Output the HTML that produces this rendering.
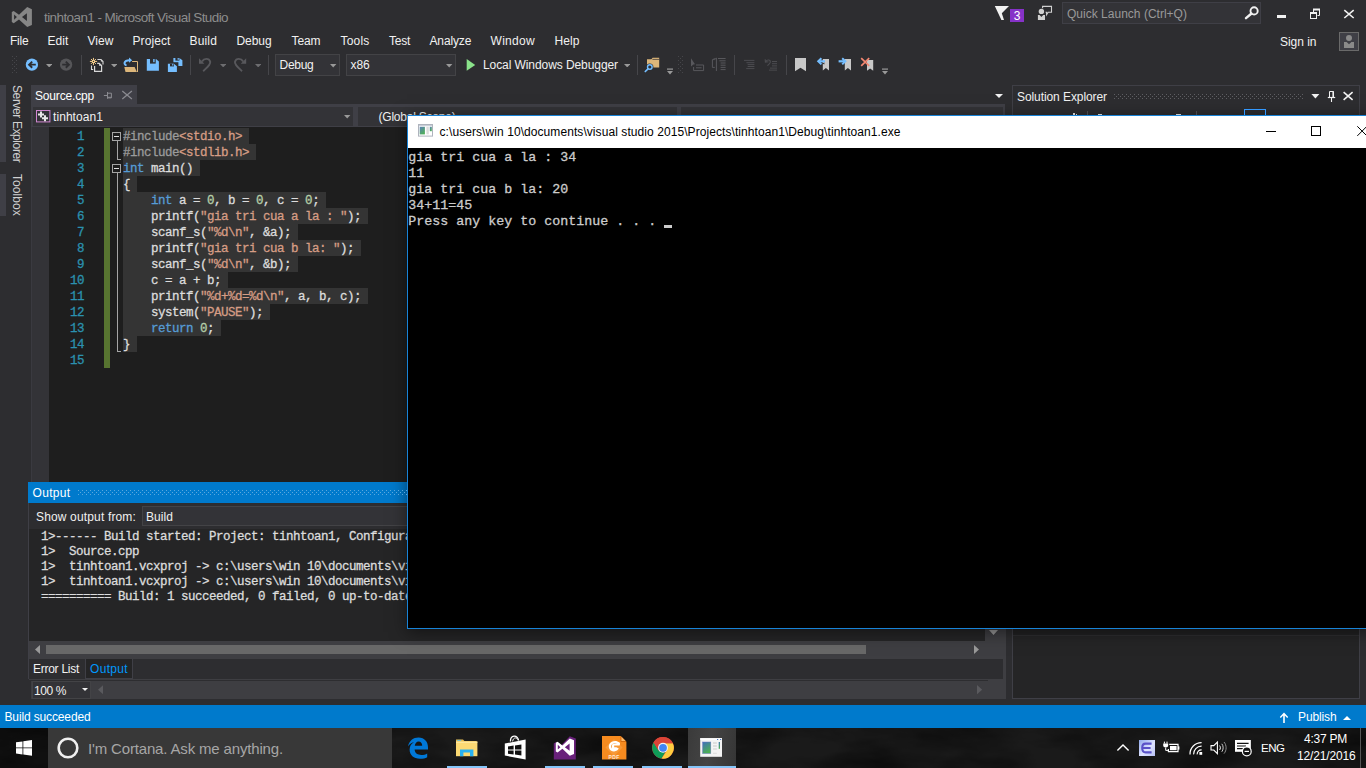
<!DOCTYPE html>
<html lang="en"><head><meta charset="utf-8"><title>tinhtoan1 - Microsoft Visual Studio</title>
<style>
html,body{margin:0;padding:0;}
body{width:1366px;height:768px;overflow:hidden;background:#2d2d30;position:relative;font-family:"Liberation Sans", sans-serif;}
#root{position:absolute;left:0;top:0;width:1366px;height:768px;overflow:hidden;}
#root div,#root span,#root svg{position:absolute;}
#root span{white-space:pre;}
.s{font-family:"Liberation Sans", sans-serif;}
.m{font-family:"Liberation Mono", monospace;-webkit-text-stroke:0.3px;}
</style></head>
<body>
<div id="root">
<span id="title" class="s" style="left:44px;top:8.82px;font-size:13.5px;line-height:18px;color:#8c8c8c;letter-spacing:-0.589px;">tinhtoan1 - Microsoft Visual Studio</span>
<span id="m_File" class="s" style="left:10.0px;top:33.34px;font-size:12px;line-height:16px;color:#f1f1f1;letter-spacing:-0.211px;">File</span>
<span id="m_Edit" class="s" style="left:47.5px;top:33.34px;font-size:12px;line-height:16px;color:#f1f1f1;letter-spacing:0.078px;">Edit</span>
<span id="m_View" class="s" style="left:87.5px;top:33.34px;font-size:12px;line-height:16px;color:#f1f1f1;letter-spacing:0.051px;">View</span>
<span id="m_Project" class="s" style="left:132.5px;top:33.34px;font-size:12px;line-height:16px;color:#f1f1f1;letter-spacing:0.092px;">Project</span>
<span id="m_Build" class="s" style="left:189.5px;top:33.34px;font-size:12px;line-height:16px;color:#f1f1f1;letter-spacing:0.163px;">Build</span>
<span id="m_Debug" class="s" style="left:236.5px;top:33.34px;font-size:12px;line-height:16px;color:#f1f1f1;letter-spacing:-0.075px;">Debug</span>
<span id="m_Team" class="s" style="left:291.5px;top:33.34px;font-size:12px;line-height:16px;color:#f1f1f1;letter-spacing:-0.086px;">Team</span>
<span id="m_Tools" class="s" style="left:340.5px;top:33.34px;font-size:12px;line-height:16px;color:#f1f1f1;letter-spacing:0.197px;">Tools</span>
<span id="m_Test" class="s" style="left:389.0px;top:33.34px;font-size:12px;line-height:16px;color:#f1f1f1;letter-spacing:-0.254px;">Test</span>
<span id="m_Analyze" class="s" style="left:429.5px;top:33.34px;font-size:12px;line-height:16px;color:#f1f1f1;letter-spacing:-0.136px;">Analyze</span>
<span id="m_Window" class="s" style="left:490.5px;top:33.34px;font-size:12px;line-height:16px;color:#f1f1f1;letter-spacing:0.302px;">Window</span>
<span id="m_Help" class="s" style="left:554.5px;top:33.34px;font-size:12px;line-height:16px;color:#f1f1f1;letter-spacing:0.078px;">Help</span>
<span id="signin" class="s" style="left:1280px;top:33.84px;font-size:12px;line-height:16px;color:#f1f1f1;letter-spacing:-0.029px;">Sign in</span>
<div style="left:1062px;top:2px;width:199px;height:22px;background:#333337;border:1px solid #3f3f46;box-sizing:border-box;"></div>
<span id="ql" class="s" style="left:1067px;top:6.34px;font-size:12px;line-height:16px;color:#999999;letter-spacing:0.013px;">Quick Launch (Ctrl+Q)</span>
<div style="left:275px;top:54px;width:64.5px;height:22px;background:#333337;border:1px solid #434346;box-sizing:border-box;"></div>
<span id="cb_debug" class="s" style="left:279.5px;top:56.84px;font-size:12px;line-height:16px;color:#f1f1f1;letter-spacing:-0.275px;">Debug</span>
<svg style="left:329.5px;top:63.7px;" width="7" height="4" viewBox="0 0 7 4"><path d="M0 0h6.4l-3.2 3.4z" fill="#999"/></svg>
<div style="left:346px;top:54px;width:110px;height:22px;background:#333337;border:1px solid #434346;box-sizing:border-box;"></div>
<span id="cb_x86" class="s" style="left:350.5px;top:56.84px;font-size:12px;line-height:16px;color:#f1f1f1;letter-spacing:-0.120px;">x86</span>
<svg style="left:446px;top:63.7px;" width="7" height="4" viewBox="0 0 7 4"><path d="M0 0h6.4l-3.2 3.4z" fill="#999"/></svg>
<span id="lwd" class="s" style="left:483px;top:57.34px;font-size:12px;line-height:16px;color:#f1f1f1;letter-spacing:-0.080px;">Local Windows Debugger</span>
<div style="left:81px;top:55px;width:1px;height:20px;background:#46464a;"></div>
<div style="left:190px;top:55px;width:1px;height:20px;background:#46464a;"></div>
<div style="left:268px;top:55px;width:1px;height:20px;background:#46464a;"></div>
<div style="left:637px;top:55px;width:1px;height:20px;background:#46464a;"></div>
<div style="left:734px;top:55px;width:1px;height:20px;background:#46464a;"></div>
<div style="left:786px;top:55px;width:1px;height:20px;background:#46464a;"></div>
<div style="left:0px;top:85px;width:5.7px;height:76.5px;background:#3f3f46;"></div>
<div style="left:0px;top:174px;width:5.7px;height:41.6px;background:#3f3f46;"></div>
<span class="s" style="left:24.1px;top:84.75px;font-size:12px;line-height:14px;color:#d0d0d0;transform-origin:0 0;transform:rotate(90deg);letter-spacing:-0.4px;">Server Explorer</span>
<span class="s" style="left:24.1px;top:173.7px;font-size:12px;line-height:14px;color:#d0d0d0;transform-origin:0 0;transform:rotate(90deg);letter-spacing:0.08px;">Toolbox</span>
<div style="left:31px;top:85px;width:106px;height:19px;background:#3f3f46;"></div>
<div style="left:31px;top:104px;width:974px;height:3px;background:#3f3f46;"></div>
<span id="tab_src" class="s" style="left:35px;top:88.14px;font-size:12px;line-height:16px;color:#ffffff;letter-spacing:-0.172px;">Source.cpp</span>
<div style="left:31px;top:107px;width:974px;height:20.5px;background:#3f3f46;"></div>
<div style="left:33px;top:107px;width:320px;height:19px;background:#333337;"></div>
<div style="left:357.5px;top:107px;width:319.5px;height:19px;background:#333337;"></div>
<div style="left:681px;top:107px;width:322px;height:19px;background:#333337;"></div>
<span id="nav1" class="s" style="left:53px;top:108.59px;font-size:12px;line-height:16px;color:#f1f1f1;letter-spacing:0.069px;">tinhtoan1</span>
<span id="nav2" class="s" style="left:378.5px;top:108.59px;font-size:12px;line-height:16px;color:#f1f1f1;letter-spacing:-0.218px;">(Global Scope)</span>
<div style="left:31px;top:127px;width:974px;height:355px;background:#1e1e1e;"></div>
<div style="left:31px;top:127px;width:18px;height:355px;background:#333337;"></div>
<div style="left:31px;top:127px;width:1px;height:355px;background:#3a3a40;"></div>
<div style="left:104px;top:128px;width:5.5px;height:240px;background:#577430;"></div>
<div style="left:122.5px;top:128px;width:126.5px;height:16px;background:#343434;"></div>
<span id="t22" class="m" style="left:77.0px;top:128.67px;font-size:12.5px;line-height:16px;color:#2b91af;letter-spacing:-0.500px;">1</span>
<span id="t23" class="m" style="left:123px;top:128.67px;font-size:12.5px;line-height:16px;color:#dcdcdc;letter-spacing:-0.500px;"><span style="position:static;color:#9b9b9b">#include</span><span style="position:static;color:#d69d85">&lt;stdio.h&gt;</span></span>
<div style="left:122.5px;top:144px;width:133.5px;height:16px;background:#343434;"></div>
<span id="t24" class="m" style="left:77.0px;top:144.67px;font-size:12.5px;line-height:16px;color:#2b91af;letter-spacing:-0.500px;">2</span>
<span id="t25" class="m" style="left:123px;top:144.67px;font-size:12.5px;line-height:16px;color:#dcdcdc;letter-spacing:-0.500px;"><span style="position:static;color:#9b9b9b">#include</span><span style="position:static;color:#d69d85">&lt;stdlib.h&gt;</span></span>
<div style="left:122.5px;top:160px;width:77.5px;height:16px;background:#343434;"></div>
<span id="t26" class="m" style="left:77.0px;top:160.67px;font-size:12.5px;line-height:16px;color:#2b91af;letter-spacing:-0.500px;">3</span>
<span id="t27" class="m" style="left:123px;top:160.67px;font-size:12.5px;line-height:16px;color:#dcdcdc;letter-spacing:-0.500px;"><span style="position:static;color:#569cd6">int</span><span style="position:static;color:#dcdcdc"> main()</span></span>
<div style="left:122.5px;top:176px;width:14.5px;height:16px;background:#343434;"></div>
<span id="t28" class="m" style="left:77.0px;top:176.67px;font-size:12.5px;line-height:16px;color:#2b91af;letter-spacing:-0.500px;">4</span>
<span id="t29" class="m" style="left:123px;top:176.67px;font-size:12.5px;line-height:16px;color:#dcdcdc;letter-spacing:-0.500px;"><span style="position:static;color:#dcdcdc">{</span></span>
<div style="left:122.5px;top:192px;width:203.5px;height:16px;background:#343434;"></div>
<span id="t30" class="m" style="left:77.0px;top:192.67px;font-size:12.5px;line-height:16px;color:#2b91af;letter-spacing:-0.500px;">5</span>
<span id="t31" class="m" style="left:123px;top:192.67px;font-size:12.5px;line-height:16px;color:#dcdcdc;letter-spacing:-0.500px;"><span style="position:static;color:#dcdcdc">    </span><span style="position:static;color:#569cd6">int</span><span style="position:static;color:#dcdcdc"> a = </span><span style="position:static;color:#b5cea8">0</span><span style="position:static;color:#dcdcdc">, b = </span><span style="position:static;color:#b5cea8">0</span><span style="position:static;color:#dcdcdc">, c = </span><span style="position:static;color:#b5cea8">0</span><span style="position:static;color:#dcdcdc">;</span></span>
<div style="left:122.5px;top:208px;width:245.5px;height:16px;background:#343434;"></div>
<span id="t32" class="m" style="left:77.0px;top:208.67px;font-size:12.5px;line-height:16px;color:#2b91af;letter-spacing:-0.500px;">6</span>
<span id="t33" class="m" style="left:123px;top:208.67px;font-size:12.5px;line-height:16px;color:#dcdcdc;letter-spacing:-0.500px;"><span style="position:static;color:#dcdcdc">    printf(</span><span style="position:static;color:#d69d85">"gia tri cua a la : "</span><span style="position:static;color:#dcdcdc">);</span></span>
<div style="left:122.5px;top:224px;width:175.5px;height:16px;background:#343434;"></div>
<span id="t34" class="m" style="left:77.0px;top:224.67px;font-size:12.5px;line-height:16px;color:#2b91af;letter-spacing:-0.500px;">7</span>
<span id="t35" class="m" style="left:123px;top:224.67px;font-size:12.5px;line-height:16px;color:#dcdcdc;letter-spacing:-0.500px;"><span style="position:static;color:#dcdcdc">    scanf_s(</span><span style="position:static;color:#d69d85">"%d\n"</span><span style="position:static;color:#dcdcdc">, &amp;a);</span></span>
<div style="left:122.5px;top:240px;width:238.5px;height:16px;background:#343434;"></div>
<span id="t36" class="m" style="left:77.0px;top:240.67px;font-size:12.5px;line-height:16px;color:#2b91af;letter-spacing:-0.500px;">8</span>
<span id="t37" class="m" style="left:123px;top:240.67px;font-size:12.5px;line-height:16px;color:#dcdcdc;letter-spacing:-0.500px;"><span style="position:static;color:#dcdcdc">    printf(</span><span style="position:static;color:#d69d85">"gia tri cua b la: "</span><span style="position:static;color:#dcdcdc">);</span></span>
<div style="left:122.5px;top:256px;width:175.5px;height:16px;background:#343434;"></div>
<span id="t38" class="m" style="left:77.0px;top:256.67px;font-size:12.5px;line-height:16px;color:#2b91af;letter-spacing:-0.500px;">9</span>
<span id="t39" class="m" style="left:123px;top:256.67px;font-size:12.5px;line-height:16px;color:#dcdcdc;letter-spacing:-0.500px;"><span style="position:static;color:#dcdcdc">    scanf_s(</span><span style="position:static;color:#d69d85">"%d\n"</span><span style="position:static;color:#dcdcdc">, &amp;b);</span></span>
<div style="left:122.5px;top:272px;width:105.5px;height:16px;background:#343434;"></div>
<span id="t40" class="m" style="left:70.0px;top:272.67px;font-size:12.5px;line-height:16px;color:#2b91af;letter-spacing:-0.500px;">10</span>
<span id="t41" class="m" style="left:123px;top:272.67px;font-size:12.5px;line-height:16px;color:#dcdcdc;letter-spacing:-0.500px;"><span style="position:static;color:#dcdcdc">    c = a + b;</span></span>
<div style="left:122.5px;top:288px;width:245.5px;height:16px;background:#343434;"></div>
<span id="t42" class="m" style="left:70.0px;top:288.67px;font-size:12.5px;line-height:16px;color:#2b91af;letter-spacing:-0.500px;">11</span>
<span id="t43" class="m" style="left:123px;top:288.67px;font-size:12.5px;line-height:16px;color:#dcdcdc;letter-spacing:-0.500px;"><span style="position:static;color:#dcdcdc">    printf(</span><span style="position:static;color:#d69d85">"%d+%d=%d\n"</span><span style="position:static;color:#dcdcdc">, a, b, c);</span></span>
<div style="left:122.5px;top:304px;width:147.5px;height:16px;background:#343434;"></div>
<span id="t44" class="m" style="left:70.0px;top:304.67px;font-size:12.5px;line-height:16px;color:#2b91af;letter-spacing:-0.500px;">12</span>
<span id="t45" class="m" style="left:123px;top:304.67px;font-size:12.5px;line-height:16px;color:#dcdcdc;letter-spacing:-0.500px;"><span style="position:static;color:#dcdcdc">    system(</span><span style="position:static;color:#d69d85">"PAUSE"</span><span style="position:static;color:#dcdcdc">);</span></span>
<div style="left:122.5px;top:320px;width:98.5px;height:16px;background:#343434;"></div>
<span id="t46" class="m" style="left:70.0px;top:320.67px;font-size:12.5px;line-height:16px;color:#2b91af;letter-spacing:-0.500px;">13</span>
<span id="t47" class="m" style="left:123px;top:320.67px;font-size:12.5px;line-height:16px;color:#dcdcdc;letter-spacing:-0.500px;"><span style="position:static;color:#dcdcdc">    </span><span style="position:static;color:#569cd6">return</span><span style="position:static;color:#dcdcdc"> </span><span style="position:static;color:#b5cea8">0</span><span style="position:static;color:#dcdcdc">;</span></span>
<div style="left:122.5px;top:336px;width:14.5px;height:16px;background:#343434;"></div>
<span id="t48" class="m" style="left:70.0px;top:336.67px;font-size:12.5px;line-height:16px;color:#2b91af;letter-spacing:-0.500px;">14</span>
<span id="t49" class="m" style="left:123px;top:336.67px;font-size:12.5px;line-height:16px;color:#dcdcdc;letter-spacing:-0.500px;"><span style="position:static;color:#dcdcdc">}</span></span>
<span id="t50" class="m" style="left:70.0px;top:352.67px;font-size:12.5px;line-height:16px;color:#2b91af;letter-spacing:-0.500px;">15</span>
<svg style="left:112px;top:132px;" width="9" height="9" viewBox="0 0 9 9"><rect x="0.5" y="0.5" width="8" height="8" fill="#1e1e1e" stroke="#a5a5a5"/><path d="M2 4.5h5" stroke="#e0e0e0"/></svg>
<svg style="left:112px;top:164px;" width="9" height="9" viewBox="0 0 9 9"><rect x="0.5" y="0.5" width="8" height="8" fill="#1e1e1e" stroke="#a5a5a5"/><path d="M2 4.5h5" stroke="#e0e0e0"/></svg>
<div style="left:117px;top:141px;width:1px;height:19px;background:#a5a5a5;"></div>
<div style="left:117px;top:159px;width:4px;height:1px;background:#a5a5a5;"></div>
<div style="left:117px;top:173px;width:1px;height:179px;background:#a5a5a5;"></div>
<div style="left:117px;top:351px;width:4px;height:1px;background:#a5a5a5;"></div>
<svg style="left:995px;top:94px;" width="8" height="4" viewBox="0 0 8 4"><path d="M0 0h8l-4 4z" fill="#f1f1f1"/></svg>
<div style="left:1012px;top:85px;width:348px;height:614px;background:#252526;border:1px solid #3f3f46;box-sizing:border-box;"></div>
<div style="left:1013px;top:86px;width:346px;height:21px;background:#2d2d30;"></div>
<div style="left:1013px;top:629px;width:346px;height:6px;background:#222223;"></div>
<div style="left:1013px;top:635px;width:346px;height:1px;background:#2f2f31;"></div>
<span id="solexp" class="s" style="left:1017px;top:88.84px;font-size:12px;line-height:16px;color:#f1f1f1;letter-spacing:-0.082px;">Solution Explorer</span>
<div style="left:1013px;top:107px;width:346px;height:8px;background:#2d2d30;"></div>
<div style="left:28px;top:482px;width:977px;height:217px;background:#2d2d30;"></div>
<div style="left:28px;top:482px;width:977px;height:21px;background:#007acc;"></div>
<span id="out_t" class="s" style="left:32.5px;top:484.84px;font-size:12px;line-height:16px;color:#ffffff;letter-spacing:0.328px;">Output</span>
<div style="left:28px;top:503px;width:1px;height:176px;background:#3f3f46;"></div>
<div style="left:29px;top:503px;width:976px;height:26px;background:#2d2d30;"></div>
<span id="sof" class="s" style="left:36px;top:508.84px;font-size:12px;line-height:16px;color:#f1f1f1;letter-spacing:0.154px;">Show output from:</span>
<div style="left:142px;top:506px;width:300px;height:20px;background:#333337;border:1px solid #434346;box-sizing:border-box;"></div>
<span id="out_build" class="s" style="left:146px;top:508.84px;font-size:12px;line-height:16px;color:#f1f1f1;letter-spacing:0.062px;">Build</span>
<div style="left:29px;top:529px;width:956px;height:112px;background:#252526;"></div>
<span id="t55" class="m" style="left:41px;top:528.67px;font-size:12.5px;line-height:16px;color:#dcdcdc;letter-spacing:-0.500px;">1&gt;------ Build started: Project: tinhtoan1, Configuration: Debug Win32 ------</span>
<span id="t56" class="m" style="left:41px;top:543.67px;font-size:12.5px;line-height:16px;color:#dcdcdc;letter-spacing:-0.500px;">1&gt;  Source.cpp</span>
<span id="t57" class="m" style="left:41px;top:558.67px;font-size:12.5px;line-height:16px;color:#dcdcdc;letter-spacing:-0.500px;">1&gt;  tinhtoan1.vcxproj -&gt; c:\users\win 10\documents\visual studio 2015\Projects\tinhtoan1\Debug\tinhtoan1.exe</span>
<span id="t58" class="m" style="left:41px;top:573.67px;font-size:12.5px;line-height:16px;color:#dcdcdc;letter-spacing:-0.500px;">1&gt;  tinhtoan1.vcxproj -&gt; c:\users\win 10\documents\visual studio 2015\Projects\tinhtoan1\Debug\tinhtoan1.pdb (Full PDB)</span>
<span id="t59" class="m" style="left:41px;top:588.67px;font-size:12.5px;line-height:16px;color:#dcdcdc;letter-spacing:-0.500px;">========== Build: 1 succeeded, 0 failed, 0 up-to-date, 0 skipped ==========</span>
<div style="left:29px;top:641px;width:977px;height:18px;background:#3e3e42;"></div>
<div style="left:985px;top:529px;width:21px;height:112px;background:#3e3e42;"></div>
<div style="left:46px;top:645px;width:820px;height:9px;background:#686868;"></div>
<svg style="left:35px;top:645px;" width="5" height="9" viewBox="0 0 5 9"><path d="M5 0v9l-5-4.5z" fill="#999"/></svg>
<svg style="left:974px;top:645px;" width="5.5" height="9.5" viewBox="0 0 5.5 9.5"><path d="M0 0v9l5-4.5z" fill="#999"/></svg>
<svg style="left:989px;top:630px;" width="9" height="5" viewBox="0 0 9 5"><path d="M0 0h9l-4.5 5z" fill="#999"/></svg>
<div style="left:29px;top:659px;width:974px;height:20px;background:#2d2d30;"></div>
<div style="left:84.5px;top:659px;width:48.5px;height:20px;background:#252526;border:1px solid #3f3f46;border-top:none;box-sizing:border-box;"></div>
<span id="errlist" class="s" style="left:33px;top:661.44px;font-size:12px;line-height:16px;color:#f1f1f1;letter-spacing:-0.269px;">Error List</span>
<span id="out_tab" class="s" style="left:90px;top:661.44px;font-size:12px;line-height:16px;color:#0097fb;letter-spacing:0.328px;">Output</span>
<div style="left:29px;top:679px;width:977px;height:2px;background:#3e3e42;"></div>
<div style="left:29px;top:680px;width:959px;height:1px;background:#2d2d30;"></div>
<div style="left:1003px;top:503px;width:3px;height:26px;background:#3e3e42;"></div>
<div style="left:1003px;top:641px;width:3px;height:57.5px;background:#3e3e42;"></div>
<div style="left:31px;top:681px;width:975px;height:17.5px;background:#3e3e42;"></div>
<div style="left:32px;top:681px;width:59px;height:18px;background:#333337;border:1px solid #434346;box-sizing:border-box;"></div>
<span id="zoom" class="s" style="left:34px;top:682.84px;font-size:12px;line-height:16px;color:#f1f1f1;letter-spacing:-0.406px;">100 %</span>
<svg style="left:82px;top:688px;" width="6" height="3" viewBox="0 0 6 3"><path d="M0 0h6l-3 3z" fill="#f1f1f1"/></svg>
<svg style="left:98px;top:685px;" width="5.2" height="9.3" viewBox="0 0 5.2 9.3"><path d="M5.2 0v9.3l-5.2-4.65z" fill="#5a5a5e"/></svg>
<svg style="left:977px;top:685px;" width="5.2" height="9.3" viewBox="0 0 5.2 9.3"><path d="M0 0v9.3l5.2-4.65z" fill="#5a5a5e"/></svg>
<div style="left:0px;top:705px;width:1366px;height:23px;background:#007acc;"></div>
<span id="status" class="s" style="left:4.5px;top:709.14px;font-size:12px;line-height:16px;color:#ffffff;letter-spacing:-0.138px;">Build succeeded</span>
<span id="publish" class="s" style="left:1298px;top:708.84px;font-size:12px;line-height:16px;color:#ffffff;letter-spacing:-0.123px;">Publish</span>
<svg style="left:1279px;top:712px;" width="10" height="11" viewBox="0 0 10 11"><path d="M5 0.5L0.8 5l1 1L4.2 3.6V11h1.6V3.6L8.2 6l1-1z" fill="#fff"/></svg>
<svg style="left:1343px;top:715.5px;" width="8" height="4" viewBox="0 0 8 4"><path d="M0 4h8l-4-4z" fill="#fff"/></svg>
<div style="left:407px;top:115px;width:970px;height:514px;background:#000000;border:1px solid #1883d7;box-sizing:border-box;box-shadow:0 3px 16px rgba(0,0,0,.5);"></div>
<div style="left:408px;top:116px;width:968px;height:32px;background:#ffffff;"></div>
<span id="con_t" class="s" style="left:439.5px;top:123.84px;font-size:12px;line-height:16px;color:#000000;letter-spacing:0.073px;">c:\users\win 10\documents\visual studio 2015\Projects\tinhtoan1\Debug\tinhtoan1.exe</span>
<span id="t66" class="m" style="left:408.3px;top:148.95px;font-size:13.33px;line-height:17px;color:#cccccc;letter-spacing:0.002px;">gia tri cua a la : 34</span>
<span id="t67" class="m" style="left:408.3px;top:164.95px;font-size:13.33px;line-height:17px;color:#cccccc;letter-spacing:0.002px;">11</span>
<span id="t68" class="m" style="left:408.3px;top:180.95px;font-size:13.33px;line-height:17px;color:#cccccc;letter-spacing:0.002px;">gia tri cua b la: 20</span>
<span id="t69" class="m" style="left:408.3px;top:196.95px;font-size:13.33px;line-height:17px;color:#cccccc;letter-spacing:0.002px;">34+11=45</span>
<span id="t70" class="m" style="left:408.3px;top:212.95px;font-size:13.33px;line-height:17px;color:#cccccc;letter-spacing:0.002px;">Press any key to continue . . . </span>
<div style="left:664px;top:225px;width:8px;height:3px;background:#cccccc;"></div>
<div style="left:1266px;top:131px;width:10px;height:1px;background:#000;"></div>
<div style="left:1311px;top:126px;width:10px;height:10px;background:transparent;border:1px solid #000;box-sizing:border-box;"></div>
<svg style="left:1357px;top:126px;" width="10" height="10" viewBox="0 0 10 10"><path d="M0.3 0.3l9.6 9.6M9.9 0.3l-9.6 9.6" stroke="#000" stroke-width="1" fill="none"/></svg>
<div style="left:0px;top:728px;width:1366px;height:40px;background:#1a1a1a;"></div>
<svg style="left:0px;top:728px;" width="1366" height="40" viewBox="0 0 1366 40"><defs><filter id="tx" x="0" y="0" width="100%" height="100%"><feTurbulence type="fractalNoise" baseFrequency="0.012 0.035" numOctaves="4" seed="7"/><feColorMatrix type="matrix" values="0 0 0 0 0  0 0 0 0 0  0 0 0 0 0  1.6 0 0 0 -0.55"/></filter></defs><rect width="1366" height="40" fill="#000" filter="url(#tx)" opacity="0.6"/></svg>
<div style="left:0px;top:728px;width:48px;height:40px;background:rgba(0,0,0,.35);"></div>
<div style="left:48px;top:728px;width:344px;height:40px;background:#383838;"></div>
<svg style="left:57px;top:737px;" width="22" height="22" viewBox="0 0 22 22"><circle cx="11" cy="11" r="9.3" fill="none" stroke="#f0f0f0" stroke-width="2.6"/></svg>
<span id="cortana" class="s" style="left:88px;top:739.00px;font-size:15px;line-height:20px;color:#a6a6a6;letter-spacing:-0.160px;">I'm Cortana. Ask me anything.</span>
<div style="left:688px;top:728px;width:48px;height:40px;background:#383838;background:linear-gradient(100deg,#3a3a3a,#444 45%,#353535);"></div>
<div style="left:446.5px;top:766px;width:40px;height:2px;background:#85c5f9;"></div>
<div style="left:544.5px;top:766px;width:40px;height:2px;background:#85c5f9;"></div>
<div style="left:593px;top:766px;width:40px;height:2px;background:#85c5f9;"></div>
<div style="left:642px;top:766px;width:40px;height:2px;background:#85c5f9;"></div>
<div style="left:688px;top:766px;width:48px;height:2px;background:#85c5f9;"></div>
<span id="eng" class="s" style="left:1261px;top:740.52px;font-size:11.5px;line-height:15px;color:#ffffff;letter-spacing:-0.474px;">ENG</span>
<span id="clock" class="s" style="left:1304px;top:730.84px;font-size:12px;line-height:16px;color:#ffffff;letter-spacing:-0.243px;">4:37 PM</span>
<span id="date" class="s" style="left:1297px;top:747.84px;font-size:12px;line-height:16px;color:#ffffff;letter-spacing:-0.156px;">12/21/2016</span>
<div style="left:1360px;top:728px;width:1px;height:40px;background:#555;"></div>
<svg style="left:0px;top:0px;" width="40" height="32" viewBox="0 0 40 32"><path fill-rule="evenodd" fill="#868686" d="M27.2 7.1L31.9 9.2V25L27.2 27L19 19.4L13.7 23.2L11.8 22.1V12.1L13.7 11L19 14.8ZM14.1 14.4V19.8L16.9 17.1ZM26.9 13.2V21L22 17.1Z"/></svg>
<svg style="left:990px;top:0px;" width="40" height="26" viewBox="0 0 40 26"><path fill="#f1f1f1" d="M4.8 5.9H19L11.8 13.2L14 19.9H11.4Z"/><rect x="20" y="9" width="14" height="13" fill="#8632c8"/></svg>
<span id="t75" class="s" style="left:1013.7px;top:7.84px;font-size:12px;line-height:16px;color:#ffffff;">3</span>
<svg style="left:1036px;top:4px;" width="18" height="18" viewBox="0 0 18 18"><circle cx="5.4" cy="7.4" r="2.7" fill="#d0d0d0"/><path fill="#d0d0d0" d="M1.9 11h7.1v4.9H1.9zM3.6 11l1.8 2 1.8-2z" fill-rule="evenodd"/><path fill="none" stroke="#d0d0d0" stroke-width="1.1" d="M6.6 4.2V2.4H15.5V8.2H12.2L10.6 10.6V8.2H9.6"/></svg>
<svg style="left:1243px;top:3px;" width="18" height="18" viewBox="0 0 18 18"><circle cx="11.1" cy="7.9" r="3.6" fill="none" stroke="#f1f1f1" stroke-width="1.9"/><path d="M8.5 10.5L3 15.2" stroke="#f1f1f1" stroke-width="2.4" stroke-linecap="round"/></svg>
<div style="left:1277px;top:15px;width:9px;height:3px;background:#f1f1f1;"></div>
<svg style="left:1308px;top:7px;" width="14" height="14" viewBox="0 0 14 14"><path fill="none" stroke="#f1f1f1" stroke-width="1" d="M5.5 5V2.5H11.5V8.5H9.5"/><path d="M5 2.5h7" stroke="#f1f1f1" stroke-width="2"/><rect x="2.5" y="6" width="6" height="5.5" fill="none" stroke="#f1f1f1"/><path d="M2 6h7" stroke="#f1f1f1" stroke-width="2"/></svg>
<svg style="left:1342px;top:8px;" width="14" height="12" viewBox="0 0 14 12"><path d="M2.3 2.2L11.7 10M11.7 2.2L2.3 10" stroke="#f1f1f1" stroke-width="1.6" fill="none"/></svg>
<div style="left:1339px;top:32px;width:20px;height:19px;background:#3f3f46;border:1px solid #6a6a6a;box-sizing:border-box;"></div>
<svg style="left:1339px;top:32px;" width="20" height="19" viewBox="0 0 20 19"><circle cx="10" cy="6" r="3" fill="#8a8a8a"/><path fill="#8a8a8a" fill-rule="evenodd" d="M5 10h10v6H5zM7.6 10l2.4 2.2 2.4-2.2z"/></svg>
<svg style="left:12px;top:56px;" width="6" height="18" viewBox="0 0 6 18"><g fill="#46464a"><rect x="0" y="0" width="1" height="1"/><rect x="4" y="0" width="1" height="1"/><rect x="2" y="2" width="1" height="1"/><rect x="0" y="4" width="1" height="1"/><rect x="4" y="4" width="1" height="1"/><rect x="2" y="6" width="1" height="1"/><rect x="0" y="8" width="1" height="1"/><rect x="4" y="8" width="1" height="1"/><rect x="2" y="10" width="1" height="1"/><rect x="0" y="12" width="1" height="1"/><rect x="4" y="12" width="1" height="1"/><rect x="2" y="14" width="1" height="1"/><rect x="0" y="16" width="1" height="1"/><rect x="4" y="16" width="1" height="1"/></g></svg>
<svg style="left:678px;top:56px;" width="6" height="18" viewBox="0 0 6 18"><g fill="#46464a"><rect x="0" y="0" width="1" height="1"/><rect x="4" y="0" width="1" height="1"/><rect x="2" y="2" width="1" height="1"/><rect x="0" y="4" width="1" height="1"/><rect x="4" y="4" width="1" height="1"/><rect x="2" y="6" width="1" height="1"/><rect x="0" y="8" width="1" height="1"/><rect x="4" y="8" width="1" height="1"/><rect x="2" y="10" width="1" height="1"/><rect x="0" y="12" width="1" height="1"/><rect x="4" y="12" width="1" height="1"/><rect x="2" y="14" width="1" height="1"/><rect x="0" y="16" width="1" height="1"/><rect x="4" y="16" width="1" height="1"/></g></svg>
<svg style="left:25px;top:58.4px;" width="14" height="14" viewBox="0 0 14 14"><circle cx="6.9" cy="6.65" r="6.15" fill="#75beff"/><path d="M10.8 6.65H4.6M7.2 3.6L4.1 6.65L7.2 9.7" stroke="#2d2d30" stroke-width="1.9" fill="none"/></svg>
<svg style="left:46px;top:63.7px;" width="6.4" height="3.4" viewBox="0 0 6.4 3.4"><path d="M0 0h6.4l-3.2 3.4z" fill="#999999"/></svg>
<svg style="left:59px;top:58.4px;" width="14" height="14" viewBox="0 0 14 14"><circle cx="7.1" cy="6.65" r="6.15" fill="#555558"/><path d="M3.2 6.65H9.4M6.8 3.6L9.9 6.65L6.8 9.7" stroke="#2d2d30" stroke-width="1.9" fill="none"/></svg>
<svg style="left:88px;top:56px;" width="18" height="18" viewBox="0 0 18 18"><g fill="none" stroke="#d8d8d8" stroke-width="1.1"><path d="M9.4 3.5H13L15 5.5V8.4"/><path d="M3.5 9.6V13.5H5.2"/></g><path d="M6.6 10V15.4H13.6V9.6L11.2 7.3H9.2" fill="#2a2a2e" stroke="#d8d8d8" stroke-width="1.2"/><path d="M12.9 3.6V5.6H14.9ZM11.1 7.4V9.7H13.5Z" fill="#d8d8d8"/><g stroke="#f8d08e" stroke-width="1"><path d="M5.45 1.9V9.1M1.9 5.4H9.1M3 3L7.9 7.9M7.9 3L3 7.9"/></g><circle cx="5.45" cy="5.4" r="1.5" fill="#f8d08e"/><circle cx="5.45" cy="5.4" r="0.6" fill="#2d2d30"/></svg>
<svg style="left:110.6px;top:63.7px;" width="6.4" height="3.4" viewBox="0 0 6.4 3.4"><path d="M0 0h6.4l-3.2 3.4z" fill="#999999"/></svg>
<svg style="left:122px;top:56px;" width="18" height="18" viewBox="0 0 18 18"><path d="M10.1 5.5H15.5V16" fill="none" stroke="#dcb67a" stroke-width="1"/><path d="M2.3 11.1H12.6L14.9 16H3.5Z" fill="#dcb67a"/><path d="M4.6 9.4C1.4 8.6 1.6 4.2 7.4 4.2" fill="none" stroke="#75beff" stroke-width="2"/><path d="M7 1.6L10.2 4.2L7 6.8Z" fill="#75beff"/></svg>
<svg style="left:146px;top:58px;" width="14" height="14" viewBox="0 0 14 14"><path d="M0.8 1H10L12.9 3.6V12.8H0.8Z" fill="#75beff"/><rect x="4" y="1" width="5.7" height="4.6" fill="#2d2d30"/><rect x="7.2" y="1" width="1.4" height="3.2" fill="#75beff"/></svg>
<svg style="left:167px;top:57px;" width="16" height="16" viewBox="0 0 16 16"><path d="M6.4 1H12.3L15.4 3.2V9H6.4Z" fill="#75beff"/><rect x="8.4" y="1" width="4" height="2.6" fill="#2d2d30"/><rect x="10.6" y="1" width="1.2" height="1.8" fill="#75beff"/><path d="M5.6 5.2H11.4V10.2H5.6Z" fill="#2d2d30"/><path d="M0.9 6.8H6.9L9.9 9.2V15H0.9Z" fill="#75beff"/><rect x="3" y="6.8" width="4" height="2.6" fill="#2d2d30"/><rect x="5.2" y="6.8" width="1.2" height="1.8" fill="#75beff"/></svg>
<svg style="left:198px;top:57px;" width="14" height="16" viewBox="0 0 14 16"><path d="M4 4.4C6 1.2 11 0.8 12.2 4.6C12.9 7 10 9.5 5.2 14.2" fill="none" stroke="#58585c" stroke-width="1.9"/><path d="M1 1.3V6.8H6.4Z" fill="#58585c"/></svg>
<svg style="left:220px;top:63.7px;" width="6.4" height="3.4" viewBox="0 0 6.4 3.4"><path d="M0 0h6.4l-3.2 3.4z" fill="#6d6d70"/></svg>
<svg style="left:233px;top:57px;" width="14" height="16" viewBox="0 0 14 16"><g transform="translate(14.2,0) scale(-1,1)"><path d="M4 4.4C6 1.2 11 0.8 12.2 4.6C12.9 7 10 9.5 5.2 14.2" fill="none" stroke="#58585c" stroke-width="1.9"/><path d="M1 1.3V6.8H6.4Z" fill="#58585c"/></g></svg>
<svg style="left:255px;top:63.7px;" width="6.4" height="3.4" viewBox="0 0 6.4 3.4"><path d="M0 0h6.4l-3.2 3.4z" fill="#6d6d70"/></svg>
<svg style="left:466px;top:58px;" width="10" height="14" viewBox="0 0 10 14"><path d="M0.7 1V12.8L9.2 6.9Z" fill="#8ae28a"/></svg>
<svg style="left:624px;top:63.7px;" width="6.4" height="3.4" viewBox="0 0 6.4 3.4"><path d="M0 0h6.4l-3.2 3.4z" fill="#999999"/></svg>
<svg style="left:644px;top:56px;" width="16" height="18" viewBox="0 0 16 18"><path d="M3 3.2H7.4L8.6 1.7H15.2V11.5H3Z" fill="#dcb67a"/><path d="M8.4 3.4H15.2" fill="none" stroke="#2d2d30" stroke-width="0.7"/><circle cx="5.8" cy="11" r="3.6" fill="#2d2d30"/><circle cx="5.8" cy="11" r="2.3" fill="#2d2d30" stroke="#75beff" stroke-width="1.4"/><path d="M4 12.8L1.3 15.5" stroke="#75beff" stroke-width="1.7" stroke-linecap="round"/></svg>
<svg style="left:667px;top:67.5px;" width="7" height="7" viewBox="0 0 7 7"><rect x="0" y="0.5" width="6" height="1.2" fill="#999999"/><path d="M0 3h6l-3 3.4z" fill="#999999"/></svg>
<svg style="left:882px;top:67.5px;" width="7" height="7" viewBox="0 0 7 7"><rect x="0" y="0.5" width="6" height="1.2" fill="#999999"/><path d="M0 3h6l-3 3.4z" fill="#999999"/></svg>
<svg style="left:690px;top:57px;" width="15" height="15" viewBox="0 0 15 15"><path d="M1 1.2V9.6L3.4 7.4L5 7.2Z" fill="#58585c"/><path d="M3.6 10V13.6H13.6V8H6" fill="none" stroke="#58585c" stroke-width="1"/><path d="M6 10.8h5.6" stroke="#58585c"/></svg>
<svg style="left:711px;top:57px;" width="16" height="15" viewBox="0 0 16 15"><path d="M3.8 2.6H1.4V10.4H3.8M2.6 1.8H5.4M5.4 0.8V14" fill="none" stroke="#58585c" stroke-width="1"/><path d="M7 1.5H14.6M8.4 3.8H14.6M9.6 6H14.6M9.6 8.2H14.6M9.6 10.4H14.6M9.6 12.6H14.6" stroke="#58585c" stroke-width="1"/></svg>
<svg style="left:743px;top:59px;" width="12" height="12" viewBox="0 0 12 12"><path d="M1 1.4H11.4M3.4 3.7H11.4M4.6 5.6H11.4M4.6 7.5H11.4M3.2 9.6H11.4" stroke="#4c4c50" stroke-width="1"/></svg>
<svg style="left:764px;top:58px;" width="14" height="13" viewBox="0 0 14 13"><path d="M1.2 1.2L1.4 4.2L4.4 3.8M1.6 3.6C3.6 0.8 6.8 2 6.2 4.4C5.8 5.8 4.4 6.6 3.4 7.6" fill="none" stroke="#4c4c50" stroke-width="1.1"/><path d="M8 3.5H13M8 5.7H13M8 7.9H13M6 10.1H13M5 12.1H13" stroke="#4c4c50" stroke-width="1"/></svg>
<svg style="left:794px;top:57px;" width="13" height="15" viewBox="0 0 13 15"><path d="M1 1H12V14.3L6.5 10.8L1 14.3Z" fill="#c8c8c8"/></svg>
<svg style="left:816px;top:57px;" width="14" height="15" viewBox="0 0 14 15"><path d="M6.8 2H13.0V13.4L9.9 11.0L6.8 13.4Z" fill="#c8c8c8"/><path d="M9 4.3H3.4" stroke="#75beff" stroke-width="2.2"/><path d="M5.4 1.2L2.2 4.3L5.4 7.4" fill="none" stroke="#75beff" stroke-width="2"/><path d="M6.4 6.6L8.4 5.6V7.6Z" fill="#2d2d30"/></svg>
<svg style="left:837px;top:57px;" width="15" height="15" viewBox="0 0 15 15"><path d="M7.8 2H14.0V13.4L10.9 11.0L7.8 13.4Z" fill="#c8c8c8"/><path d="M1.6 4.3H7.4" stroke="#75beff" stroke-width="2.2"/><path d="M5.2 1.2L8.4 4.3L5.2 7.4" fill="none" stroke="#75beff" stroke-width="2"/></svg>
<svg style="left:860px;top:57px;" width="14" height="15" viewBox="0 0 14 15"><path d="M7 3H13.2V13.8L10.1 11.4L7 13.8Z" fill="#c8c8c8"/><path d="M1.2 1.2L9.2 8.8M9.2 1.2L1.2 8.8" stroke="#f48771" stroke-width="1.7" fill="none"/></svg>
<svg style="left:103px;top:91px;" width="10" height="9" viewBox="0 0 10 9"><path d="M0.9 4.5H4M4.5 1V7.8M5 2.2H8.4V6.9H5M5 6.3H8.4" fill="none" stroke="#8a8a90" stroke-width="1"/></svg>
<svg style="left:121px;top:90px;" width="12" height="10" viewBox="0 0 12 10"><path d="M1.3 1L10.9 9M10.9 1L1.3 9" stroke="#8a8a90" stroke-width="1.3" fill="none"/></svg>
<svg style="left:36px;top:110px;" width="15" height="13" viewBox="0 0 15 13"><rect x="0.5" y="0.5" width="13.4" height="11.4" fill="none" stroke="#cf86cf"/><path d="M5 1.4v6M2 4.4h6M9 5.2v6M6 8.2h6" stroke="#e8e8e8" stroke-width="2"/></svg>
<svg style="left:344px;top:115px;" width="7" height="4" viewBox="0 0 7 4"><path d="M0 0h6.4l-3.2 3.4z" fill="#999"/></svg>
<svg style="left:1310.5px;top:93.7px;" width="9" height="5" viewBox="0 0 9 5"><path d="M0.4 0h8l-4 4.4z" fill="#f1f1f1"/></svg>
<svg style="left:1327px;top:90px;" width="10" height="13" viewBox="0 0 10 13"><path d="M2.5 7V1.5H6.5V7" fill="none" stroke="#f1f1f1" stroke-width="1"/><path d="M6.2 1.5V7" stroke="#f1f1f1" stroke-width="1.6"/><path d="M0.8 7.5H8.2" stroke="#f1f1f1" stroke-width="1.2"/><path d="M4.5 8V12" stroke="#f1f1f1" stroke-width="1.1"/></svg>
<svg style="left:1342px;top:91px;" width="12" height="10" viewBox="0 0 12 10"><path d="M1.6 1.2L10.6 8.8M10.6 1.2L1.6 8.8" stroke="#f1f1f1" stroke-width="1.6" fill="none"/></svg>
<svg style="left:418px;top:124.2px;" width="15" height="12.6" viewBox="0 0 15 12.6"><defs><linearGradient id="cg1" x1="0" y1="0" x2="0.6" y2="1"><stop offset="0" stop-color="#5b7fb8"/><stop offset="1" stop-color="#4fae5a"/></linearGradient></defs><rect x="0.5" y="0.5" width="14" height="11.6" fill="#ffffff" stroke="#aeb3bd"/><rect x="1.7" y="2.8" width="5.2" height="7.6" fill="url(#cg1)"/><rect x="8.4" y="2.8" width="2.4" height="7.6" fill="#dcdcdc"/><rect x="11.8" y="2.8" width="2" height="4.4" fill="url(#cg1)"/><rect x="1" y="1" width="13" height="1.2" fill="#c9ced8"/></svg>
<svg style="left:700px;top:738px;" width="23" height="20" viewBox="0 0 23 20"><defs><linearGradient id="cg2" x1="0" y1="0" x2="0.5" y2="1"><stop offset="0" stop-color="#3f6fbc"/><stop offset="1" stop-color="#4cb052"/></linearGradient></defs><rect x="0.2" y="0.2" width="21.8" height="18.6" fill="#f4f4f4"/><rect x="0.2" y="0.2" width="21.8" height="1.6" fill="#ffffff"/><rect x="2.6" y="4" width="8.2" height="11.5" fill="url(#cg2)"/><rect x="2.6" y="4" width="8.2" height="11.5" fill="none" stroke="#6a78c0" stroke-width="0.5"/><rect x="13" y="4.4" width="3.8" height="1.2" fill="#cfcfcf"/><rect x="13" y="7.4" width="3.8" height="1.2" fill="#cfcfcf"/><rect x="13" y="10.4" width="3.8" height="1.2" fill="#d4d4d4"/><rect x="13" y="14.8" width="3.8" height="1" fill="#dcdcdc"/><rect x="18.7" y="4" width="1.3" height="6.8" fill="url(#cg2)"/><rect x="17" y="1" width="1.2" height="0.9" fill="#3f6fbc"/><rect x="20" y="1" width="1.2" height="0.9" fill="#3f6fbc"/></svg>
<svg style="left:16px;top:740px;" width="16" height="16" viewBox="0 0 16 16"><path fill="#ffffff" d="M0 2.3L6.5 1.4V7.5H0ZM7.3 1.3L16 0V7.5H7.3ZM0 8.3H6.5V14.4L0 13.5ZM7.3 8.3H16V15.8L7.3 14.5Z"/></svg>
<svg style="left:407px;top:737px;" width="22" height="22" viewBox="0 0 22 22"><path fill="#0078d7" d="M1 9.6C2 3.6 6.4 0.4 11.4 0.4C17.6 0.4 21 4.8 21 10.4V12.6H7.6C7.8 16.4 11 18 14.2 18C16.6 18 18.6 17.4 20.2 16.4V20.2C18.4 21.2 16 21.8 13 21.8C6.6 21.8 2.6 18 2.6 12.6C2.6 9.2 4.4 6.6 7 5C4.4 5.6 2.2 7.4 1 9.6ZM7.8 8.8H15.2C15.2 6.2 13.8 4.6 11.6 4.6C9.6 4.6 8.2 6.2 7.8 8.8Z"/></svg>
<svg style="left:455px;top:738px;" width="24" height="20" viewBox="0 0 24 20"><path fill="#e8b94a" d="M1 1.4H8L9.4 3H21.6V5H1Z"/><rect x="1" y="3.6" width="21.4" height="14.6" fill="#fbd973"/><rect x="1" y="3.6" width="21.4" height="1.2" fill="#fde9a6"/><path fill="#29b1f0" d="M5 18.2V11.6H18.4V18.2H15V14.6H8.4V18.2Z"/><rect x="2.2" y="1.9" width="4" height="0.9" fill="#5fc3ee"/></svg>
<svg style="left:504px;top:735px;" width="24" height="26" viewBox="0 0 24 26"><path fill="none" stroke="#ffffff" stroke-width="1.3" d="M6.4 6.6C6.4 -0.4 13.2 -0.4 14.6 5.4"/><path fill="none" stroke="#ffffff" stroke-width="1" d="M8.6 6.4C9.4 1.6 13.4 2.2 14.2 5.4"/><path fill="#ffffff" d="M0.8 8.6L21.6 4.6V24.4L0.8 20.6Z"/><path fill="#111" d="M4 11.4L9.6 10.6V14.4H4ZM11 10.4L17.4 9.4V14.4H11ZM4 15.6H9.6V19.4L4 18.8ZM11 15.6H17.4V20.6L11 19.6Z"/></svg>
<svg style="left:553px;top:735px;" width="24" height="26" viewBox="0 0 24 26"><path fill="#68217a" d="M0.8 8.4L3.4 7L8 10.6L16.8 1.2L22.8 3.6V24.6H0.8Z"/><path fill="#ffffff" fill-rule="evenodd" d="M16.8 3.4L21 5.2V19L16.8 20.8L9.4 13.8L4.6 17.6L2.8 16.6V7.8L4.6 6.8L9.4 10.6ZM4.8 9.8V14.6L7.4 12.2ZM16.6 8.6V15.8L11.8 12.2Z"/></svg>
<svg style="left:601px;top:735px;" width="26" height="26" viewBox="0 0 26 26"><path fill="#f68b1f" d="M1 1H19.6L25.4 6.8V24.6H1Z"/><path fill="#c8600a" d="M19.6 1V6.8H25.4Z"/><path fill="#ffb866" d="M20.4 1.8L24.6 6H20.4Z"/><path fill="#f9a54a" d="M13 4L21.6 12.6L13 21.2L4.4 12.6Z" opacity="0.55"/><path fill="#ffffff" d="M18.6 7.6C15.8 5 10.4 5.4 8.4 9C6.6 12.4 9 16.6 13.2 16.4C15.4 16.3 17 15.2 17.8 13.6L15.4 12.2H13.2V10.4H18.6C19.2 9.2 19.2 8.4 18.6 7.6ZM16.2 8.8H12.6C11.4 8.8 11 9.8 11 10.8V13.6C10 12.6 9.8 10.8 10.8 9.6C12 8 14.6 7.8 16.2 8.8Z"/></svg>
<span class="s" style="left:608.5px;top:753.6px;font-size:5px;line-height:6px;color:rgba(255,255,255,.8);font-weight:bold;letter-spacing:0.4px;">PDF</span>
<svg style="left:651px;top:736px;" width="24" height="24" viewBox="0 0 24 24"><circle cx="12" cy="11.8" r="10.9" fill="#db4437"/><path fill="#0f9d58" d="M2.6 6.4A10.9 10.9 0 0 0 10.6 22.6L15.4 14.2L7.6 14.6Z"/><path fill="#ffcd40" d="M10.6 22.6A10.9 10.9 0 0 0 21.8 7.2H12L16.2 14Z"/><path fill="#db4437" d="M2.6 6.4A10.9 10.9 0 0 1 21.8 7.2H12L7.6 14.6Z"/><circle cx="12" cy="11.8" r="5" fill="#f1f1f1"/><circle cx="12" cy="11.8" r="3.9" fill="#4285f4"/></svg>
<svg style="left:1116px;top:743px;" width="14" height="9" viewBox="0 0 14 9"><path d="M1.4 7.6L7 2L12.6 7.6" fill="none" stroke="#ffffff" stroke-width="1.4"/></svg>
<div style="left:1138.7px;top:739.8px;width:16.4px;height:15.8px;background:linear-gradient(135deg,#8fa8ea,#dfe4ff 55%,#b9c2f4);"></div>
<svg style="left:1138.7px;top:739.8px;" width="16.4" height="15.8" viewBox="0 0 16.4 15.8"><path d="M12.6 3.6H6.6C4 3.6 3.2 6 3.2 8C3.2 10 4 12.4 6.6 12.4H12.6M3.6 8H11.6" fill="none" stroke="#5a52c8" stroke-width="2.1"/></svg>
<svg style="left:1162px;top:741px;" width="18" height="13" viewBox="0 0 18 13"><path d="M7.2 3.4H16V10.6H6.4V8" fill="none" stroke="#ffffff" stroke-width="1.2"/><rect x="16" y="5.4" width="1.4" height="3.2" fill="#fff"/><rect x="8" y="5" width="6.6" height="4.2" fill="#fff"/><path d="M2.4 0.6V2.6M5 0.6V2.6" stroke="#fff" stroke-width="1"/><path d="M1.2 2.6H6.2V4.6C6.2 5.8 5.2 6.6 3.7 6.6C2.2 6.6 1.2 5.8 1.2 4.6Z" fill="#fff"/><path d="M3.7 6.6V9.4H6.4" fill="none" stroke="#fff" stroke-width="1"/></svg>
<svg style="left:1188px;top:741px;" width="16" height="15" viewBox="0 0 16 15"><path d="M2 13.4A11.4 11.4 0 0 1 13.6 1.6" fill="none" stroke="#fff" stroke-width="1.2"/><path d="M5.6 13.4A7.8 7.8 0 0 1 13.6 5.2" fill="none" stroke="#fff" stroke-width="1.2"/><path d="M9.2 13.4A4.2 4.2 0 0 1 13.6 8.8" fill="none" stroke="#fff" stroke-width="1.2"/><rect x="11.4" y="11" width="2.8" height="2.8" fill="#fff"/></svg>
<svg style="left:1210px;top:740px;" width="18" height="16" viewBox="0 0 18 16"><path d="M1 5.6H3.8L7.4 2V13.6L3.8 10H1Z" fill="none" stroke="#fff" stroke-width="1.1"/><path d="M9.6 5.6C10.6 6.8 10.6 8.8 9.6 10" fill="none" stroke="#fff" stroke-width="1"/><path d="M11.8 3.8C13.6 6 13.6 9.6 11.8 11.8" fill="none" stroke="#cfcfcf" stroke-width="1"/><path d="M14 2C16.8 5.2 16.8 10.4 14 13.6" fill="none" stroke="#8f8f8f" stroke-width="1"/></svg>
<svg style="left:1234px;top:739px;" width="19" height="18" viewBox="0 0 19 18"><path d="M1 1H16.6V12.6H10.4" fill="#fff"/><path d="M1 1H16.6V12.8H1Z" fill="#fff"/><path d="M3 4.4H14.6M3 7H12M3 9.6H9" stroke="#111" stroke-width="1.1"/><circle cx="12.8" cy="12.4" r="4.4" fill="#111" stroke="#fff" stroke-width="1.2"/><path d="M10.6 12.4H15" stroke="#fff" stroke-width="1.2"/></svg>
<svg style="left:1114px;top:94px;" width="189" height="5" viewBox="0 0 189 5"><defs><pattern id="gp1" width="4" height="4" patternUnits="userSpaceOnUse"><rect x="0" y="0" width="1" height="1" fill="#5e5e62"/><rect x="2" y="2" width="1" height="1" fill="#5e5e62"/></pattern></defs><rect width="189" height="5" fill="url(#gp1)"/></svg>
<svg style="left:78px;top:490px;" width="330" height="5" viewBox="0 0 330 5"><defs><pattern id="gp2" width="4" height="4" patternUnits="userSpaceOnUse"><rect x="0" y="0" width="1" height="1" fill="#59a8de"/><rect x="2" y="2" width="1" height="1" fill="#59a8de"/></pattern></defs><rect width="330" height="5" fill="url(#gp2)"/></svg>
<div style="left:1244px;top:109px;width:22px;height:6px;background:transparent;border:1px solid #3399ff;border-bottom:none;box-sizing:border-box;"></div>
<div style="left:1087px;top:111px;width:1px;height:4px;background:#46464a;"></div>
<div style="left:1196px;top:111px;width:1px;height:4px;background:#46464a;"></div>
<div style="left:1073px;top:113px;width:2px;height:2px;background:#c8c8c8;"></div>
<div style="left:1076px;top:114px;width:1px;height:1px;background:#c8c8c8;"></div>
<div style="left:1098px;top:114px;width:4px;height:1px;background:#c8c8c8;"></div>
<div style="left:1176px;top:114px;width:5px;height:1px;background:#c8c8c8;"></div>
</div>
</body></html>
